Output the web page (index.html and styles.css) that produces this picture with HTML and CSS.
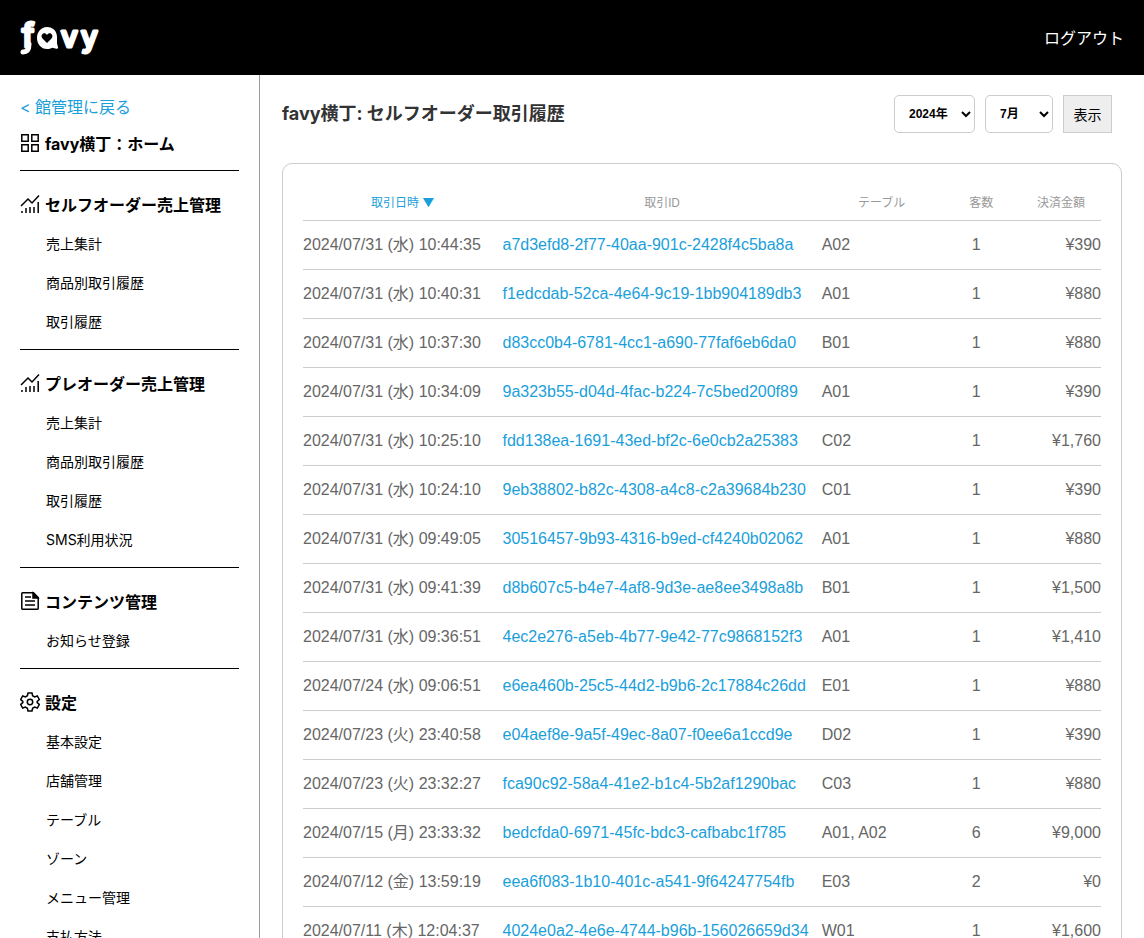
FILE: index.html
```html
<!DOCTYPE html>
<html lang="ja">
<head>
  <meta charset="UTF-8">
  <meta name="viewport" content="width=device-width, initial-scale=1.0">
  <title>セルフオーダー取引履歴</title>
  <link rel="stylesheet" href="styles.css">
</head>
<body>

<header class="header">
  <a href="#" class="logo" aria-label="favy">
    <svg width="90" height="60" viewBox="0 0 90 60">
      <text class="logo-text" y="39"><tspan class="logo-f" x="2">f</tspan><tspan x="41">v</tspan><tspan x="61">y</tspan></text>
      <path d="M3 44q6 0 6-8" fill="none" stroke="#fff" stroke-width="5" stroke-linecap="round"/>
      <path d="M27 19c6 0 10 4.200 10 10v6.500l1 3.500c.3 1.400-.6 2-1.700 1.700l-3.800-1c-1.700.8-3.700 1.300-5.500 1.300-6 0-10-5-10-11S21 19 27 19z" fill="#fff"/>
      <path d="M27 35l-4.500-4.500c-3-3.500 2-7.500 4.500-3.500 2.500-4 7.500 0 4.500 3.500z" fill="#000"/>
    </svg>
  </a>
  <a href="#" class="logout">ログアウト</a>
</header>

<div class="container">
  <nav class="sidebar">
    <a href="#" class="back">&lt; 館管理に戻る</a>
    <a href="#" class="home">
      <svg class="icon" viewBox="0 0 20 20"><path d="M1.8 1.8h6.4v6.4H1.8zM11.8 1.8h6.4v6.4h-6.4zM1.8 11.8h6.4v6.4H1.8zM11.8 11.8h6.4v6.4h-6.4z"/></svg>
      favy横丁：ホーム
    </a>

    <section class="menu">
      <h2>
        <svg class="icon" viewBox="0 0 20 20"><path d="M1 12l7-7 4 4 7-7.500M2 19v-2M6 19v-5M10 19v-6M14 19v-6M18.200 19V8"/></svg>
        セルフオーダー売上管理
      </h2>
      <ul>
        <li><a href="#">売上集計</a></li>
        <li><a href="#">商品別取引履歴</a></li>
        <li><a href="#">取引履歴</a></li>
      </ul>
    </section>

    <section class="menu">
      <h2>
        <svg class="icon" viewBox="0 0 20 20"><path d="M1 12l7-7 4 4 7-7.500M2 19v-2M6 19v-5M10 19v-6M14 19v-6M18.200 19V8"/></svg>
        プレオーダー売上管理
      </h2>
      <ul>
        <li><a href="#">売上集計</a></li>
        <li><a href="#">商品別取引履歴</a></li>
        <li><a href="#">取引履歴</a></li>
        <li><a href="#">SMS利用状況</a></li>
      </ul>
    </section>

    <section class="menu">
      <h2>
        <svg class="icon" viewBox="0 0 20 20"><path d="M2.500 1.800h11l4.700 4.700v11q0 .7-.7.7h-15q-.7 0-.7-.7v-15q0-.7.7-.7zM5 6h6M5 10h10M5 14h10"/><path d="M13 2v5h5z" fill="#000"/></svg>
        コンテンツ管理
      </h2>
      <ul>
        <li><a href="#">お知らせ登録</a></li>
      </ul>
    </section>

    <section class="menu">
      <h2>
        <svg class="icon" viewBox="0 0 20 20"><path d="M8 1h4l.6 2.700 2 1.200 2.700-.9 2 3.500-2.100 1.900v1.200l2.100 1.900-2 3.500-2.700-.9-2 1.200L12 19H8l-.6-2.700-2-1.200-2.700.9-2-3.500 2.100-1.900V9.400L.7 7.500l2-3.500 2.700.9 2-1.200z"/><circle cx="10" cy="10" r="2.700"/></svg>
        設定
      </h2>
      <ul>
        <li><a href="#">基本設定</a></li>
        <li><a href="#">店舗管理</a></li>
        <li><a href="#">テーブル</a></li>
        <li><a href="#">ゾーン</a></li>
        <li><a href="#">メニュー管理</a></li>
        <li><a href="#">支払方法</a></li>
      </ul>
    </section>
  </nav>

  <main class="main">
    <div class="page-head">
      <h1>favy横丁: セルフオーダー取引履歴</h1>
      <form class="filter">
        <select class="year" aria-label="年"><option>2024年</option></select>
        <select class="month" aria-label="月"><option>7月</option></select>
        <button type="button">表示</button>
      </form>
    </div>

    <div class="card">
      <table class="history">
        <thead>
          <tr>
            <th class="col-date"><a href="#">取引日時 ▼</a></th>
            <th class="col-id">取引ID</th>
            <th class="col-table">テーブル</th>
            <th class="col-guests">客数</th>
            <th class="col-price">決済金額</th>
          </tr>
        </thead>
        <tbody>
          <tr><td>2024/07/31 (水) 10:44:35</td><td><a href="#">a7d3efd8-2f77-40aa-901c-2428f4c5ba8a</a></td><td>A02</td><td>1</td><td>¥390</td></tr>
          <tr><td>2024/07/31 (水) 10:40:31</td><td><a href="#">f1edcdab-52ca-4e64-9c19-1bb904189db3</a></td><td>A01</td><td>1</td><td>¥880</td></tr>
          <tr><td>2024/07/31 (水) 10:37:30</td><td><a href="#">d83cc0b4-6781-4cc1-a690-77faf6eb6da0</a></td><td>B01</td><td>1</td><td>¥880</td></tr>
          <tr><td>2024/07/31 (水) 10:34:09</td><td><a href="#">9a323b55-d04d-4fac-b224-7c5bed200f89</a></td><td>A01</td><td>1</td><td>¥390</td></tr>
          <tr><td>2024/07/31 (水) 10:25:10</td><td><a href="#">fdd138ea-1691-43ed-bf2c-6e0cb2a25383</a></td><td>C02</td><td>1</td><td>¥1,760</td></tr>
          <tr><td>2024/07/31 (水) 10:24:10</td><td><a href="#">9eb38802-b82c-4308-a4c8-c2a39684b230</a></td><td>C01</td><td>1</td><td>¥390</td></tr>
          <tr><td>2024/07/31 (水) 09:49:05</td><td><a href="#">30516457-9b93-4316-b9ed-cf4240b02062</a></td><td>A01</td><td>1</td><td>¥880</td></tr>
          <tr><td>2024/07/31 (水) 09:41:39</td><td><a href="#">d8b607c5-b4e7-4af8-9d3e-ae8ee3498a8b</a></td><td>B01</td><td>1</td><td>¥1,500</td></tr>
          <tr><td>2024/07/31 (水) 09:36:51</td><td><a href="#">4ec2e276-a5eb-4b77-9e42-77c9868152f3</a></td><td>A01</td><td>1</td><td>¥1,410</td></tr>
          <tr><td>2024/07/24 (水) 09:06:51</td><td><a href="#">e6ea460b-25c5-44d2-b9b6-2c17884c26dd</a></td><td>E01</td><td>1</td><td>¥880</td></tr>
          <tr><td>2024/07/23 (火) 23:40:58</td><td><a href="#">e04aef8e-9a5f-49ec-8a07-f0ee6a1ccd9e</a></td><td>D02</td><td>1</td><td>¥390</td></tr>
          <tr><td>2024/07/23 (火) 23:32:27</td><td><a href="#">fca90c92-58a4-41e2-b1c4-5b2af1290bac</a></td><td>C03</td><td>1</td><td>¥880</td></tr>
          <tr><td>2024/07/15 (月) 23:33:32</td><td><a href="#">bedcfda0-6971-45fc-bdc3-cafbabc1f785</a></td><td>A01, A02</td><td>6</td><td>¥9,000</td></tr>
          <tr><td>2024/07/12 (金) 13:59:19</td><td><a href="#">eea6f083-1b10-401c-a541-9f64247754fb</a></td><td>E03</td><td>2</td><td>¥0</td></tr>
          <tr><td>2024/07/11 (木) 12:04:37</td><td><a href="#">4024e0a2-4e6e-4744-b96b-156026659d34</a></td><td>W01</td><td>1</td><td>¥1,600</td></tr>
        </tbody>
      </table>
    </div>
  </main>
</div>

</body>
</html>
```
FILE: styles.css
```css
* {
  box-sizing: border-box;
}

body {
  margin: 0;
  height: 100vh;
  overflow: hidden;
  display: flex;
  flex-direction: column;
  background: #fff;
  color: #333;
  font-family: Inter, "Noto Sans CJK JP", sans-serif;
  font-size: 14px;
}

a {
  color: #1a9fdb;
  text-decoration: none;
}

h1,
h2,
ul {
  margin: 0;
  padding: 0;
}

/* header */
.header {
  display: flex;
  flex-shrink: 0;
  align-items: center;
  justify-content: space-between;
  height: 75px;
  padding: 0 20px;
  background: #000;
}

.logo svg {
  display: block;
}

.logo-text {
  font-family: Inter, sans-serif;
  font-weight: 500;
  font-size: 29px;
  fill: #fff;
  stroke: #fff;
  stroke-width: 3;
  stroke-linejoin: round;
}

.logo-f {
  font-size: 32px;
}

.logout {
  color: #fff;
  font-size: 16px;
  line-height: 20px;
}

.container {
  display: flex;
  flex: 1;
  min-height: 0;
}

/* sidebar */
.sidebar {
  flex: 0 0 260px;
  padding: 16px 20px 0;
  border-right: 1px solid #999;
  overflow: hidden;
}

.back {
  display: block;
  font-size: 16px;
  line-height: 32px;
}

.home,
.menu h2 {
  display: flex;
  align-items: center;
  gap: 5px;
  height: 40px;
  color: #000;
  font-size: 16px;
  font-weight: bold;
}

.home {
  margin-bottom: 7px;
}

.icon {
  width: 20px;
  height: 20px;
  flex-shrink: 0;
  fill: none;
  stroke: #000;
  stroke-width: 1.5;
}

.menu {
  padding: 13px 0 8px;
  border-top: 1px solid #000;
}

.menu ul {
  list-style: none;
}

.menu li a {
  display: block;
  padding-left: 26px;
  color: #000;
  line-height: 39px;
}

/* main */
.main {
  flex: 1;
  min-width: 0;
  padding: 20px 22px;
}

.page-head {
  display: flex;
  align-items: center;
  justify-content: space-between;
  height: 38px;
  margin-bottom: 30px;
  padding-right: 10px;
}

h1 {
  font-size: 18px;
  line-height: 36px;
}

.filter {
  display: flex;
  gap: 10px;
}

.filter select,
.filter button {
  height: 38px;
  border: 1px solid #ccc;
  color: #000;
}

.filter select {
  padding: 0 0 0 10px;
  border-radius: 5px;
  background: #fff;
  font-family: "Liberation Sans", "Noto Sans CJK JP", sans-serif;
  font-size: 12px;
  font-weight: bold;
}

.year {
  width: 81px;
}

.month {
  width: 68px;
}

.filter button {
  width: 49px;
  padding: 0;
  background: #eee;
  font-family: inherit;
  font-size: 14px;
}

.card {
  padding: 20px;
  border: 1px solid #ccc;
  border-radius: 10px;
}

.history {
  width: 100%;
  border-collapse: collapse;
  table-layout: fixed;
}

.history th {
  height: 36px;
  padding: 0;
  border-bottom: 1px solid #ccc;
  color: #999;
  font-size: 12px;
  font-weight: normal;
}

.history td {
  height: 49px;
  padding: 0 10px 0 0;
  border-bottom: 1px solid #ccc;
  color: #666;
  font-family: "Liberation Sans", "Noto Sans CJK JP", sans-serif;
  font-size: 16px;
  line-height: 24px;
  white-space: nowrap;
}

.history td:nth-child(4) {
  text-align: center;
}

.history td:last-child {
  padding-right: 0;
  text-align: right;
}

.col-date {
  width: 25%;
}

.col-id {
  width: 40%;
}

.col-table {
  width: 15%;
}

.col-guests,
.col-price {
  width: 10%;
}
```
